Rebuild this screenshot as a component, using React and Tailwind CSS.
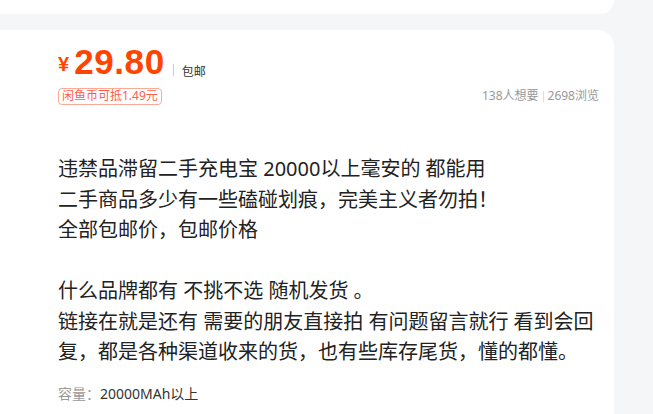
import React from 'react';

const cjk = { fontFamily: '"Noto Sans", "Noto Sans CJK SC", sans-serif' };

const desc = [
  '违禁品滞留二手充电宝 20000以上毫安的 都能用',
  '二手商品多少有一些磕碰划痕，完美主义者勿拍！',
  '全部包邮价，包邮价格',
  '',
  '什么品牌都有 不挑不选 随机发货 。',
  '链接在就是还有 需要的朋友直接拍 有问题留言就行 看到会回复，都是各种渠道收来的货，也有些库存尾货，懂的都懂。',
];

export default function App() {
  return (
    <div className="w-[653px] h-[414px] overflow-hidden bg-[#f5f6f8]" style={cjk}>
      {/* previous card bottom */}
      <div className="w-[614px] h-[14px] bg-white rounded-br-[16px]" />

      <div className="mt-[16px] w-[614px] h-[400px] bg-white rounded-tr-[16px] pl-[58px] pr-[15px] pt-[13px]">
        {/* price row */}
        <div className="flex items-end h-[36px]">
          <span className="text-[20px] font-bold text-[#ff4400] leading-none mb-[5px]" style={{ fontFamily: '"Liberation Sans", sans-serif' }}>¥</span>
          <span className="ml-[5px] text-[35px] font-bold text-[#ff4400] leading-none tracking-[0.6px]" style={{ fontFamily: '"Liberation Sans", sans-serif' }}>29.80</span>
          <span className="ml-[8px] mb-[3px] w-px h-[12px] bg-[#cccccc]" />
          <span className="ml-[8px] mb-[1px] text-[12px] text-[#333333] leading-none">包邮</span>
        </div>

        {/* tag + stats */}
        <div className="mt-[8px] flex items-center justify-between">
          <span className="border border-[#ffa898] rounded-[4px] px-[3px] h-[17px] flex items-center text-[12px] leading-none text-[#ff5e48]">闲鱼币可抵1.49元</span>
          <div className="flex items-center text-[12px] text-[#999999]">
            <span>138人想要</span>
            <span className="mx-[4px] w-px h-[11px] bg-[#dddddd]" />
            <span>2698浏览</span>
          </div>
        </div>

        {/* description */}
        <div className="mt-[49px] text-[20px] leading-[30.5px] text-[#222222] w-[545px]">
          {desc.map((line, i) => (
            <p key={i} className="min-h-[30.5px]">{line}</p>
          ))}
        </div>

        <div className="mt-[19px] text-[14px] leading-none">
          <span className="text-[#999999]">容量：</span>
          <span className="text-[#333333]">20000MAh以上</span>
        </div>
      </div>
    </div>
  );
}
